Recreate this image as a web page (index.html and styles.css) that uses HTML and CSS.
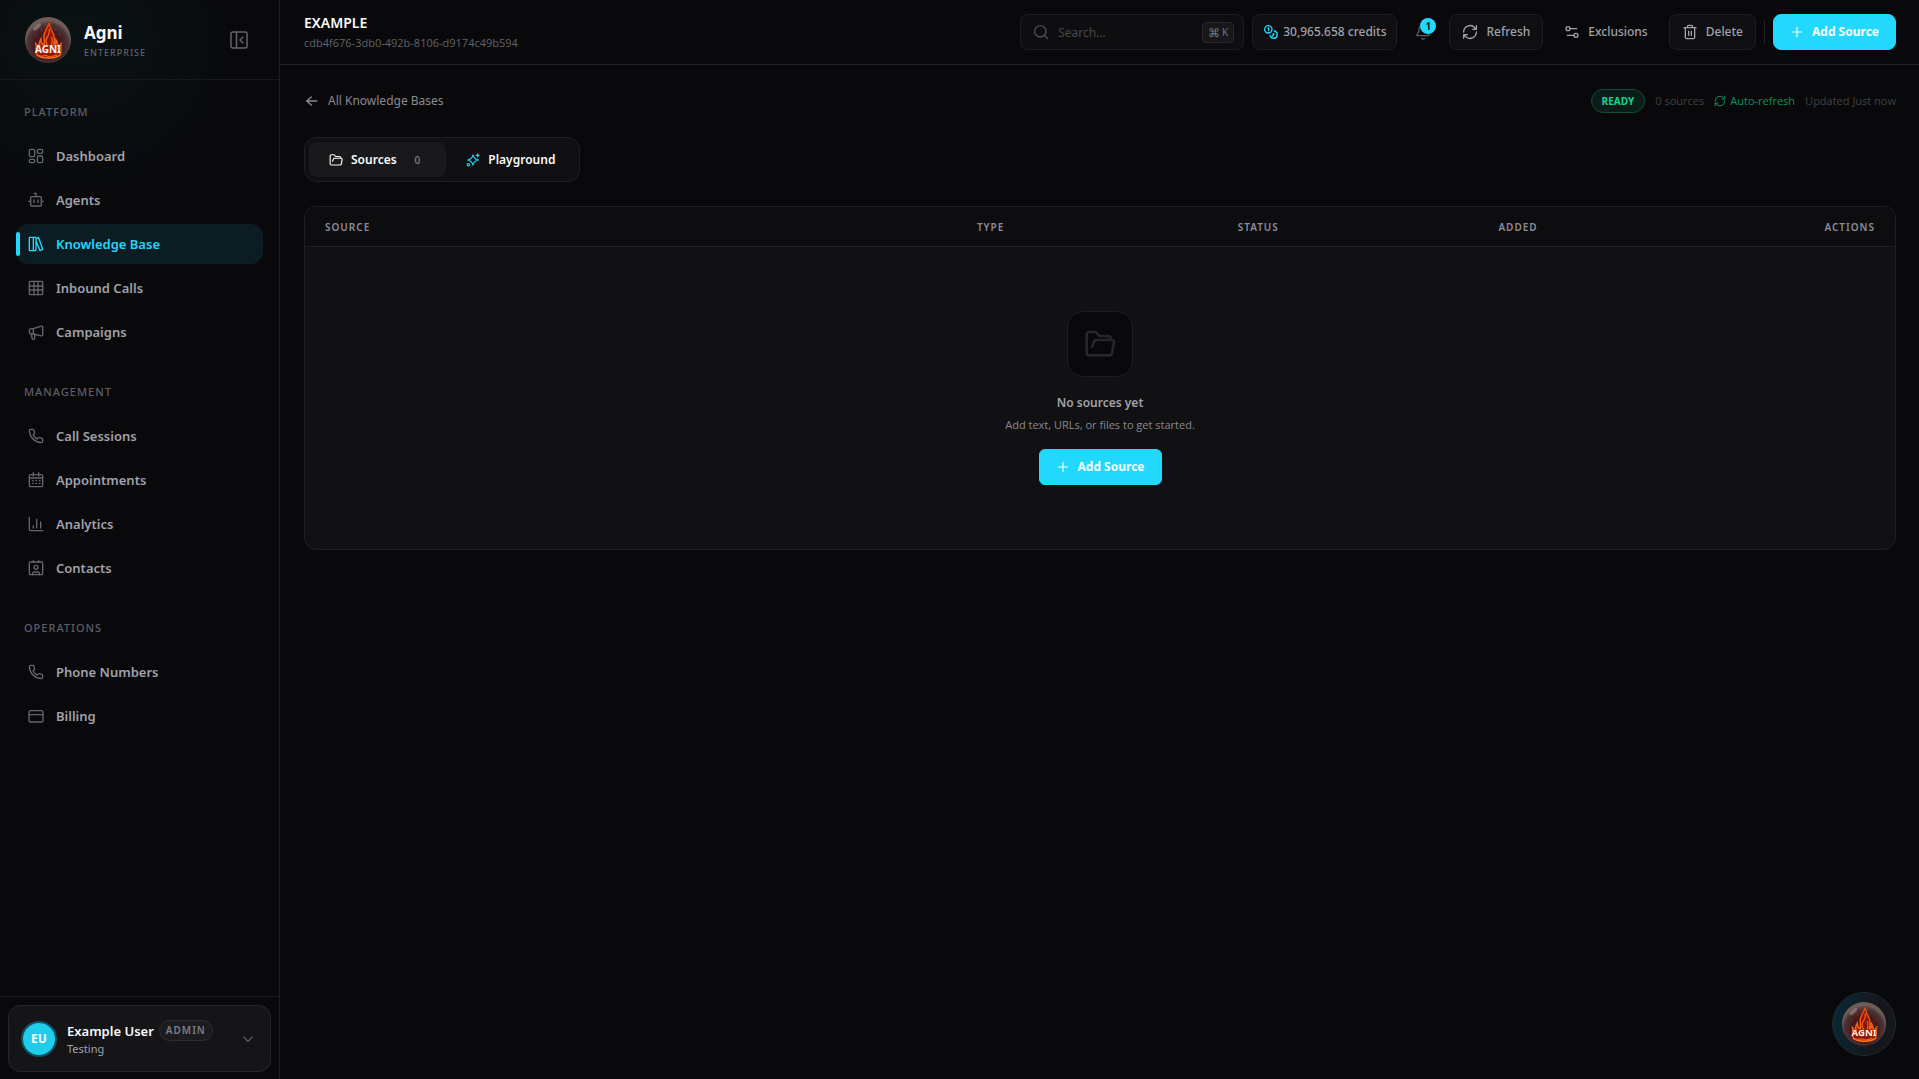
FILE: index.html
```html
<!DOCTYPE html>
<html lang="en">
<head>
<meta charset="utf-8">
<meta name="viewport" content="width=device-width, initial-scale=1">
<title>EXAMPLE – Agni</title>
<link rel="stylesheet" href="styles.css">
</head>
<body>
<svg class="sprite" aria-hidden="true">
  <defs>
    <radialGradient id="orb-fill" cx="50%" cy="60%" r="52%">
      <stop offset="0" stop-color="#6a1208"/>
      <stop offset=".55" stop-color="#45191a"/>
      <stop offset=".86" stop-color="#4a3638"/>
      <stop offset="1" stop-color="#6e5d57"/>
    </radialGradient>
    <linearGradient id="flame-fill" x1="0" y1="0" x2="0" y2="1">
      <stop offset="0" stop-color="#e8410e"/>
      <stop offset="1" stop-color="#ff7a1c"/>
    </linearGradient>
    <symbol id="orb" viewBox="0 0 48 48">
      <circle cx="24" cy="24" r="23" fill="url(#orb-fill)"/>
      <ellipse cx="13" cy="11" rx="5" ry="2" fill="#b59a98" opacity=".5" transform="rotate(-42 13 11)"/>
      <path d="M25 7c-1 5-5 8-5 13 0 4 1 6 0 9-3-1-3-3-3-6-2 3-1 5-3 8-1-1-1-2-2-3 1 4-1 7 1 11 5 4 18 4 23 0 2-4 0-7 1-11-1 1-2 2-2 3-2-2-1-4-3-7 0 3 0 5-2 5 0-3 1-5 0-9-1-4-4-7-5-13z" fill="#86190a" stroke="url(#flame-fill)" stroke-width="1.500"/>
      <path d="M25 13c2 5-3 8-3 12 0 3 2 4 1 6M27 21c3 3 0 5 1 9M16 29c1 2-1 4 1 6M33 29c-1 2 1 4-1 6M14 39c4 3 6-1 9 1s6 0 10-1" fill="none" stroke="#ff5a14" stroke-width="1.300"/>
      <path d="M22 10l-2-3M28 8l2-3M18 15l-1-2M12 20v-1M36 19v-1M31 14l1-1" stroke="#a82c0b" stroke-width="1"/>
      <text x="24" y="37" text-anchor="middle" class="orb-text">AGNI</text>
    </symbol>
    <symbol id="i-dash" viewBox="0 0 24 24"><rect x="2" y="2" width="8" height="11" rx="2"/><rect x="14" y="2" width="8" height="6" rx="2"/><rect x="2" y="17" width="8" height="5" rx="2"/><rect x="14" y="12" width="8" height="10" rx="2"/></symbol>
    <symbol id="i-bot" viewBox="0 0 24 24"><path d="M9 2h3v5"/><rect x="4" y="7" width="16" height="14" rx="2"/><path d="M1 14h3M20 14h3M9 12v4M15 12v4"/></symbol>
    <symbol id="i-books" viewBox="0 0 24 24"><rect x="2" y="2" width="6" height="20" rx="1"/><path d="M8 2h3a1 1 0 0 1 1 1v18a1 1 0 0 1-1 1H8M12 4l4-1.5L22 20l-4 2L12 7"/></symbol>
    <symbol id="i-grid" viewBox="0 0 24 24"><rect x="2" y="2" width="20" height="20" rx="2"/><path d="M2 9h20M2 15h20M9 2v20M15 2v20"/></symbol>
    <symbol id="i-mega" viewBox="0 0 24 24"><path d="M8 7 20 3.200a1.500 1.500 0 0 1 2 1.400v11.800a1.500 1.500 0 0 1-2 1.400L8 15H5a3 3 0 0 1-3-3v-2a3 3 0 0 1 3-3zM8 7v8M5 15l1 5a2 2 0 0 0 4 1.500L10 16"/></symbol>
    <symbol id="i-phone" viewBox="0 0 24 24"><path d="M22 17v3a2 2 0 0 1-2 2A19 19 0 0 1 2 4a2 2 0 0 1 2-2h3a2 2 0 0 1 2 1.700l.8 3.500a2 2 0 0 1-.6 1.900L7.700 10.500a15 15 0 0 0 6 6l1.400-1.500a2 2 0 0 1 2-.6l3.400.8A2 2 0 0 1 22 17z"/></symbol>
    <symbol id="i-cal" viewBox="0 0 24 24"><rect x="2" y="4" width="20" height="18" rx="2"/><path d="M2 9h20M8 1v5M16 1v5M7 13h1M12 13h1M17 13h1M7 17h1M12 17h1M17 17h1"/></symbol>
    <symbol id="i-chart" viewBox="0 0 24 24"><path d="M2 2v18a2 2 0 0 0 2 2h18M8 15v3M13 5v13M19 9v9"/></symbol>
    <symbol id="i-contact" viewBox="0 0 24 24"><rect x="2" y="3" width="20" height="19" rx="2"/><path d="M8 1v2M16 1v2M7 22v-2a2 2 0 0 1 2-2h6a2 2 0 0 1 2 2v2"/><circle cx="12" cy="11" r="3"/></symbol>
    <symbol id="i-card" viewBox="0 0 24 24"><rect x="1.500" y="4" width="21" height="17" rx="2"/><path d="M2 10h20"/></symbol>
    <symbol id="i-panel" viewBox="0 0 24 24"><rect x="4" y="4" width="16" height="16" rx="2"/><path d="M9.500 4v16M16 9l-3 3 3 3"/></symbol>
    <symbol id="i-down" viewBox="0 0 24 24"><path d="m5 9 7 7 7-7"/></symbol>
    <symbol id="i-search" viewBox="0 0 24 24"><circle cx="11" cy="11" r="8.500"/><path d="m17 17 5 5"/></symbol>
    <symbol id="i-coins" viewBox="0 0 24 24"><circle cx="8" cy="8" r="5.500"/><path d="M17 10.500A5.500 5.500 0 1 1 10.500 17M7.500 6H8.500v4M15.500 14.500l1 .500-2.500 3"/></symbol>
    <symbol id="i-bell" viewBox="0 0 24 24"><path d="M10 21.500a2.500 2.500 0 0 0 4 0M3.500 15.500A1 1 0 0 0 4 17.500h16a1 1 0 0 0 .500-2C19 14 18 12.500 18 8A6 6 0 0 0 6 8c0 4.500-1 6-2.500 7.500z"/></symbol>
    <symbol id="i-sync" viewBox="0 0 24 24"><path d="M2.500 12A9.500 9.500 0 0 1 19 5.500L21.500 8M21.500 2.500V8H16M21.500 12A9.500 9.500 0 0 1 5 18.500L2.500 16M2.500 21.500V16H8"/></symbol>
    <symbol id="i-tune" viewBox="0 0 24 24"><circle cx="6" cy="7" r="3"/><circle cx="18" cy="17" r="3"/><path d="M9 7h10M5 17h10"/></symbol>
    <symbol id="i-trash" viewBox="0 0 24 24"><path d="M3 5.500h18M19 5.500V20a2 2 0 0 1-2 2H7a2 2 0 0 1-2-2V5.500M8 5.500V4a2 2 0 0 1 2-2h4a2 2 0 0 1 2 2v1.500M10 11v6M14 11v6"/></symbol>
    <symbol id="i-plus" viewBox="0 0 24 24"><path d="M4 12h16M12 4v16"/></symbol>
    <symbol id="i-back" viewBox="0 0 24 24"><path d="m11 18-7-6 7-6M4 12h15"/></symbol>
    <symbol id="i-folder" viewBox="0 0 24 24"><path d="m6 14 1.500-3.500a2 2 0 0 1 2-1.500H21a1.500 1.500 0 0 1 1.500 2L21 19a2 2 0 0 1-2 1.500H4a2 2 0 0 1-2-2V5a2 2 0 0 1 2-2h4a2 2 0 0 1 1.700.9L11 5.500a2 2 0 0 0 1.700.5H18a2 2 0 0 1 2 2v1"/></symbol>
    <symbol id="i-spark" viewBox="0 0 24 24"><path d="M12 3c.8 5 3 7.500 9 9-6 1.500-8.200 4-9 9-.8-5-3-7.500-9-9 6-1.500 8.200-4 9-9zM20 1.500v5M17.500 4h5"/><circle cx="4" cy="20" r="2"/></symbol>
  </defs>
</svg>

<div class="app">
  <aside class="sidebar">
    <div class="brand">
      <svg class="brand-orb"><use href="#orb"/></svg>
      <div class="brand-text">
        <span class="brand-name">Agni</span>
        <span class="brand-plan">ENTERPRISE</span>
      </div>
      <button class="collapse" aria-label="Collapse sidebar"><svg class="icon icon-24"><use href="#i-panel"/></svg></button>
    </div>

    <nav class="nav">
      <section class="nav-group">
        <h2 class="nav-label">PLATFORM</h2>
        <a class="nav-item" href="#"><svg class="icon icon-16"><use href="#i-dash"/></svg>Dashboard</a>
        <a class="nav-item" href="#"><svg class="icon icon-16"><use href="#i-bot"/></svg>Agents</a>
        <a class="nav-item active" href="#" aria-current="page"><svg class="icon icon-16"><use href="#i-books"/></svg>Knowledge Base</a>
        <a class="nav-item" href="#"><svg class="icon icon-16"><use href="#i-grid"/></svg>Inbound Calls</a>
        <a class="nav-item" href="#"><svg class="icon icon-16"><use href="#i-mega"/></svg>Campaigns</a>
      </section>
      <section class="nav-group">
        <h2 class="nav-label">MANAGEMENT</h2>
        <a class="nav-item" href="#"><svg class="icon icon-16"><use href="#i-phone"/></svg>Call Sessions</a>
        <a class="nav-item" href="#"><svg class="icon icon-16"><use href="#i-cal"/></svg>Appointments</a>
        <a class="nav-item" href="#"><svg class="icon icon-16"><use href="#i-chart"/></svg>Analytics</a>
        <a class="nav-item" href="#"><svg class="icon icon-16"><use href="#i-contact"/></svg>Contacts</a>
      </section>
      <section class="nav-group">
        <h2 class="nav-label">OPERATIONS</h2>
        <a class="nav-item" href="#"><svg class="icon icon-16"><use href="#i-phone"/></svg>Phone Numbers</a>
        <a class="nav-item" href="#"><svg class="icon icon-16"><use href="#i-card"/></svg>Billing</a>
      </section>
    </nav>

    <div class="account">
      <button class="account-card">
        <span class="avatar">EU</span>
        <span class="account-text">
          <span class="account-line"><span class="account-name">Example User</span><span class="role">ADMIN</span></span>
          <span class="account-org">Testing</span>
        </span>
        <svg class="icon icon-14"><use href="#i-down"/></svg>
      </button>
    </div>
  </aside>

  <div class="main">
    <header class="topbar">
      <div class="titles">
        <h1 class="title">EXAMPLE</h1>
        <p class="subtitle">cdb4f676-3db0-492b-8106-d9174c49b594</p>
      </div>
      <div class="tools">
        <label class="search">
          <svg class="icon icon-16"><use href="#i-search"/></svg>
          <input type="text" placeholder="Search..." aria-label="Search">
          <kbd class="keys"><span>⌘</span>K</kbd>
        </label>
        <button class="btn credits"><svg class="icon icon-16 bright"><use href="#i-coins"/></svg>30,965.658 credits</button>
        <button class="bell" aria-label="Notifications"><svg class="icon icon-16"><use href="#i-bell"/></svg><span class="badge">1</span></button>
        <button class="btn"><svg class="icon icon-16"><use href="#i-sync"/></svg>Refresh</button>
        <button class="btn ghost"><svg class="icon icon-16"><use href="#i-tune"/></svg>Exclusions</button>
        <button class="btn"><svg class="icon icon-16"><use href="#i-trash"/></svg>Delete</button>
        <span class="divider"></span>
        <button class="btn primary"><svg class="icon icon-14"><use href="#i-plus"/></svg>Add Source</button>
      </div>
    </header>

    <main class="content">
      <div class="crumbs">
        <a class="back" href="#"><svg class="icon icon-16"><use href="#i-back"/></svg>All Knowledge Bases</a>
        <div class="meta">
          <span class="ready">READY</span>
          <span>0 sources</span>
          <span class="auto"><svg class="icon icon-12"><use href="#i-sync"/></svg>Auto-refresh</span>
          <span>Updated Just now</span>
        </div>
      </div>

      <div class="tabs" role="tablist">
        <button class="tab selected" role="tab" aria-selected="true"><svg class="icon icon-14"><use href="#i-folder"/></svg>Sources<span class="count">0</span></button>
        <button class="tab" role="tab" aria-selected="false"><svg class="icon icon-14 bright"><use href="#i-spark"/></svg>Playground</button>
      </div>

      <div class="panel">
        <table class="sources">
          <thead>
            <tr><th class="col-source">SOURCE</th><th class="col-mid">TYPE</th><th class="col-mid">STATUS</th><th class="col-mid">ADDED</th><th class="col-actions">ACTIONS</th></tr>
          </thead>
          <tbody>
            <tr><td colspan="5">
              <div class="empty">
                <span class="empty-icon"><svg class="icon icon-32"><use href="#i-folder"/></svg></span>
                <h3 class="empty-title">No sources yet</h3>
                <p class="empty-note">Add text, URLs, or files to get started.</p>
                <button class="btn primary"><svg class="icon icon-14"><use href="#i-plus"/></svg>Add Source</button>
              </div>
            </td></tr>
          </tbody>
        </table>
      </div>
    </main>
  </div>
</div>

<button class="assistant" aria-label="Open Agni assistant"><svg><use href="#orb"/></svg></button>
</body>
</html>
```
FILE: styles.css
```css
:root {
  --bg: #09090b;
  --panel: #111113;
  --line: #1e1e21;
  --text: #fafafa;
  --soft: #a1a1aa;
  --dim: #62626c;
  --cyan: #22d8fd;
}

* { box-sizing: border-box; }

body {
  margin: 0;
  background: var(--bg);
  color: var(--text);
  font-family: "Noto Sans", "Open Sans", sans-serif;
  font-size: 12px;
  line-height: 16px;
}

h1, h2, h3, p { margin: 0; font-size: inherit; }
a { color: inherit; text-decoration: none; }
button { font: inherit; color: inherit; background: none; border: 0; padding: 0; cursor: pointer; }

.sprite { position: absolute; width: 0; height: 0; }
.orb-text { font: 700 10px "Noto Sans", sans-serif; fill: #fff0e8; stroke: #b42c0c; stroke-width: 1px; paint-order: stroke; }

.icon { flex: none; fill: none; stroke: currentColor; stroke-width: 2; stroke-linecap: round; stroke-linejoin: round; }
.icon-12 { width: 12px; height: 12px; }
.icon-14 { width: 14px; height: 14px; }
.icon-16 { width: 16px; height: 16px; }
.icon-24 { width: 24px; height: 24px; }
.icon-32 { width: 32px; height: 32px; }
.bright { color: var(--cyan); }

.app { display: flex; min-height: 100vh; }

/* Sidebar */
.sidebar {
  display: flex;
  flex-direction: column;
  flex: none;
  width: 280px;
  border-right: 1px solid var(--line);
  background: radial-gradient(circle at 80px 40px, #0a1214 0, #09090b 160px);
}
.brand {
  display: flex;
  align-items: center;
  gap: 12px;
  height: 80px;
  padding: 0 28px 0 24px;
  border-bottom: 1px solid #17191b;
}
.brand-orb { width: 48px; height: 48px; }
.brand-text { display: flex; flex-direction: column; flex: 1; padding-top: 2px; }
.brand-name { font-size: 17px; font-weight: 700; line-height: 24px; }
.brand-plan { font-size: 9px; font-weight: 500; letter-spacing: 1px; color: var(--dim); }
.collapse { display: flex; color: var(--dim); }
.collapse .icon { stroke-width: 1.5; }

.nav { display: flex; flex-direction: column; gap: 32px; flex: 1; padding: 24px 16px; }
.nav-group { display: flex; flex-direction: column; gap: 4px; }
.nav-label { margin-bottom: 12px; padding-left: 8px; font-size: 11px; font-weight: 500; letter-spacing: 1px; color: #5e5e68; }
.nav-item {
  display: flex;
  align-items: center;
  gap: 12px;
  height: 40px;
  padding: 0 12px;
  border-radius: 12px;
  font-size: 13px;
  font-weight: 600;
  color: var(--soft);
}
.nav-item .icon { color: #666670; }
.nav-item.active { position: relative; background: #0b1d22; color: var(--cyan); }
.nav-item.active .icon { color: var(--cyan); }
.nav-item.active::before {
  content: "";
  position: absolute;
  left: 0;
  top: 8px;
  bottom: 8px;
  width: 4px;
  border-radius: 2px;
  background: var(--cyan);
}

.account { padding: 8px 8px 7px; border-top: 1px solid var(--line); }
.account-card {
  display: flex;
  align-items: center;
  gap: 12px;
  width: 100%;
  height: 67px;
  padding: 0 15px 0 14px;
  border: 1px solid #27272a;
  border-radius: 12px;
  background: #151517;
  text-align: left;
  color: var(--dim);
}
.avatar {
  display: grid;
  place-items: center;
  width: 32px;
  height: 32px;
  border-radius: 50%;
  background: #1fcdea;
  box-shadow: 0 0 0 2px #0e5361;
  font-weight: 700;
  color: #fff;
}
.account-text { display: flex; flex-direction: column; flex: 1; }
.account-line { display: flex; align-items: center; gap: 5px; }
.account-name { font-size: 13px; font-weight: 600; color: var(--text); }
.role {
  padding: 1px 6px;
  border: 1px solid #2f2f33;
  border-radius: 12px;
  background: #1c1c1f;
  font-size: 10px;
  line-height: 17px;
  font-weight: 600;
  letter-spacing: 1px;
  color: #7d7d87;
}
.account-org { font-size: 11px; color: var(--soft); }

/* Top bar */
.main { display: flex; flex-direction: column; flex: 1; min-width: 0; }
.topbar {
  display: flex;
  align-items: center;
  justify-content: space-between;
  height: 65px;
  padding: 0 23px 0 24px;
  border-bottom: 1px solid #222225;
}
.titles { padding-top: 2px; }
.title { font-size: 14px; font-weight: 600; line-height: 20px; }
.subtitle { font-family: "Open Sans", sans-serif; font-size: 11px; line-height: 20px; color: var(--dim); }
.tools { display: flex; align-items: center; gap: 8px; }

.search {
  display: flex;
  align-items: center;
  gap: 9px;
  width: 224px;
  height: 36px;
  padding: 0 9px 0 12px;
  border: 1px solid var(--line);
  border-radius: 8px;
  background: #0e0e10;
  color: #4c4c54;
}
.search input { flex: 1; min-width: 0; padding: 2px 0 0; border: 0; outline: 0; background: none; font: inherit; color: var(--text); }
.search input::placeholder { color: #46464d; }
.keys {
  display: flex;
  align-items: center;
  gap: 2px;
  height: 21px;
  padding: 0 5px;
  border: 1px solid #27272a;
  border-radius: 4px;
  background: #18181a;
  font: 10px "Noto Sans", sans-serif;
  color: #74747e;
}
.keys span { font-size: 12px; }

.btn {
  display: flex;
  align-items: center;
  gap: 8px;
  height: 36px;
  padding: 0 12px;
  border: 1px solid var(--line);
  border-radius: 8px;
  background: #0f0f11;
  font-weight: 500;
  color: var(--soft);
}
.credits { gap: 4px; padding: 0 10px; }
.ghost { border-color: transparent; background: none; }
.primary { padding: 0 16px; border-color: var(--cyan); background: var(--cyan); font-weight: 700; color: #f4feff; }
.empty .primary { border-radius: 6px; }
.bell { position: relative; display: grid; place-items: center; width: 36px; height: 36px; color: #5c5c66; }
.badge {
  position: absolute;
  right: 5px;
  top: 4px;
  width: 16px;
  height: 16px;
  border-radius: 50%;
  background: var(--cyan);
  font-size: 10px;
  font-weight: 700;
  color: #09242b;
}
.divider { width: 1px; height: 24px; background: #242427; }

/* Page content */
.content { padding: 24px 23px 24px 24px; }
.crumbs { display: flex; align-items: center; justify-content: space-between; height: 24px; }
.back { display: flex; align-items: center; gap: 8px; color: #898992; }
.meta { display: flex; align-items: center; gap: 10px; font-family: "Open Sans", sans-serif; font-size: 11px; color: #404046; }
.ready {
  padding: 3px 10px;
  border: 1px solid #0d4d38;
  border-radius: 12px;
  background: #0a1d19;
  font-size: 10px;
  font-weight: 700;
  color: #11d694;
}
.auto { display: flex; align-items: center; gap: 4px; color: #12925f; }

.tabs {
  display: inline-flex;
  margin: 24px 0;
  padding: 4px;
  border: 1px solid #202023;
  border-radius: 12px;
  background: #101012;
  vertical-align: top;
}
.tab { display: flex; align-items: center; gap: 8px; height: 35px; padding: 0 20px; border-radius: 8px; font-weight: 600; }
.selected { background: #19191b; }
.count { padding: 0 6px; margin-left: 4px; font-size: 10px; font-weight: 500; color: #84848e; }

.panel { border: 1px solid #202023; border-radius: 12px; background: var(--panel); overflow: hidden; }
.sources { width: 100%; border-collapse: separate; border-spacing: 0; table-layout: fixed; }
.sources th {
  height: 40px;
  padding: 0 0 0 20px;
  border-bottom: 1px solid #202023;
  background: #0d0d0f;
  font-size: 10px;
  font-weight: 600;
  letter-spacing: 1px;
  text-align: left;
  color: #8c8c96;
}
.sources td { padding: 0; }
.sources .col-source { width: 41%; }
.col-mid { width: 16.4%; }
.sources .col-actions { padding-right: 20px; text-align: right; }

.empty { display: flex; flex-direction: column; align-items: center; padding: 64px 20px; }
.empty-icon {
  display: grid;
  place-items: center;
  width: 66px;
  height: 66px;
  margin-bottom: 16px;
  border: 1px solid var(--line);
  border-radius: 16px;
  background: var(--bg);
  color: #27272b;
}
.empty-title { margin-bottom: 4px; font-size: 12px; line-height: 20px; font-weight: 600; color: var(--soft); }
.empty-note { margin-bottom: 16px; font-family: "Open Sans", sans-serif; font-size: 11px; color: #888892; }

.assistant {
  position: fixed;
  right: 23px;
  bottom: 23px;
  display: grid;
  place-items: center;
  width: 64px;
  height: 64px;
  border: 1px solid #23292d;
  border-radius: 50%;
  background: linear-gradient(100deg, #082a38, #14181c 60%);
}
.assistant svg { width: 46px; height: 46px; }
```
